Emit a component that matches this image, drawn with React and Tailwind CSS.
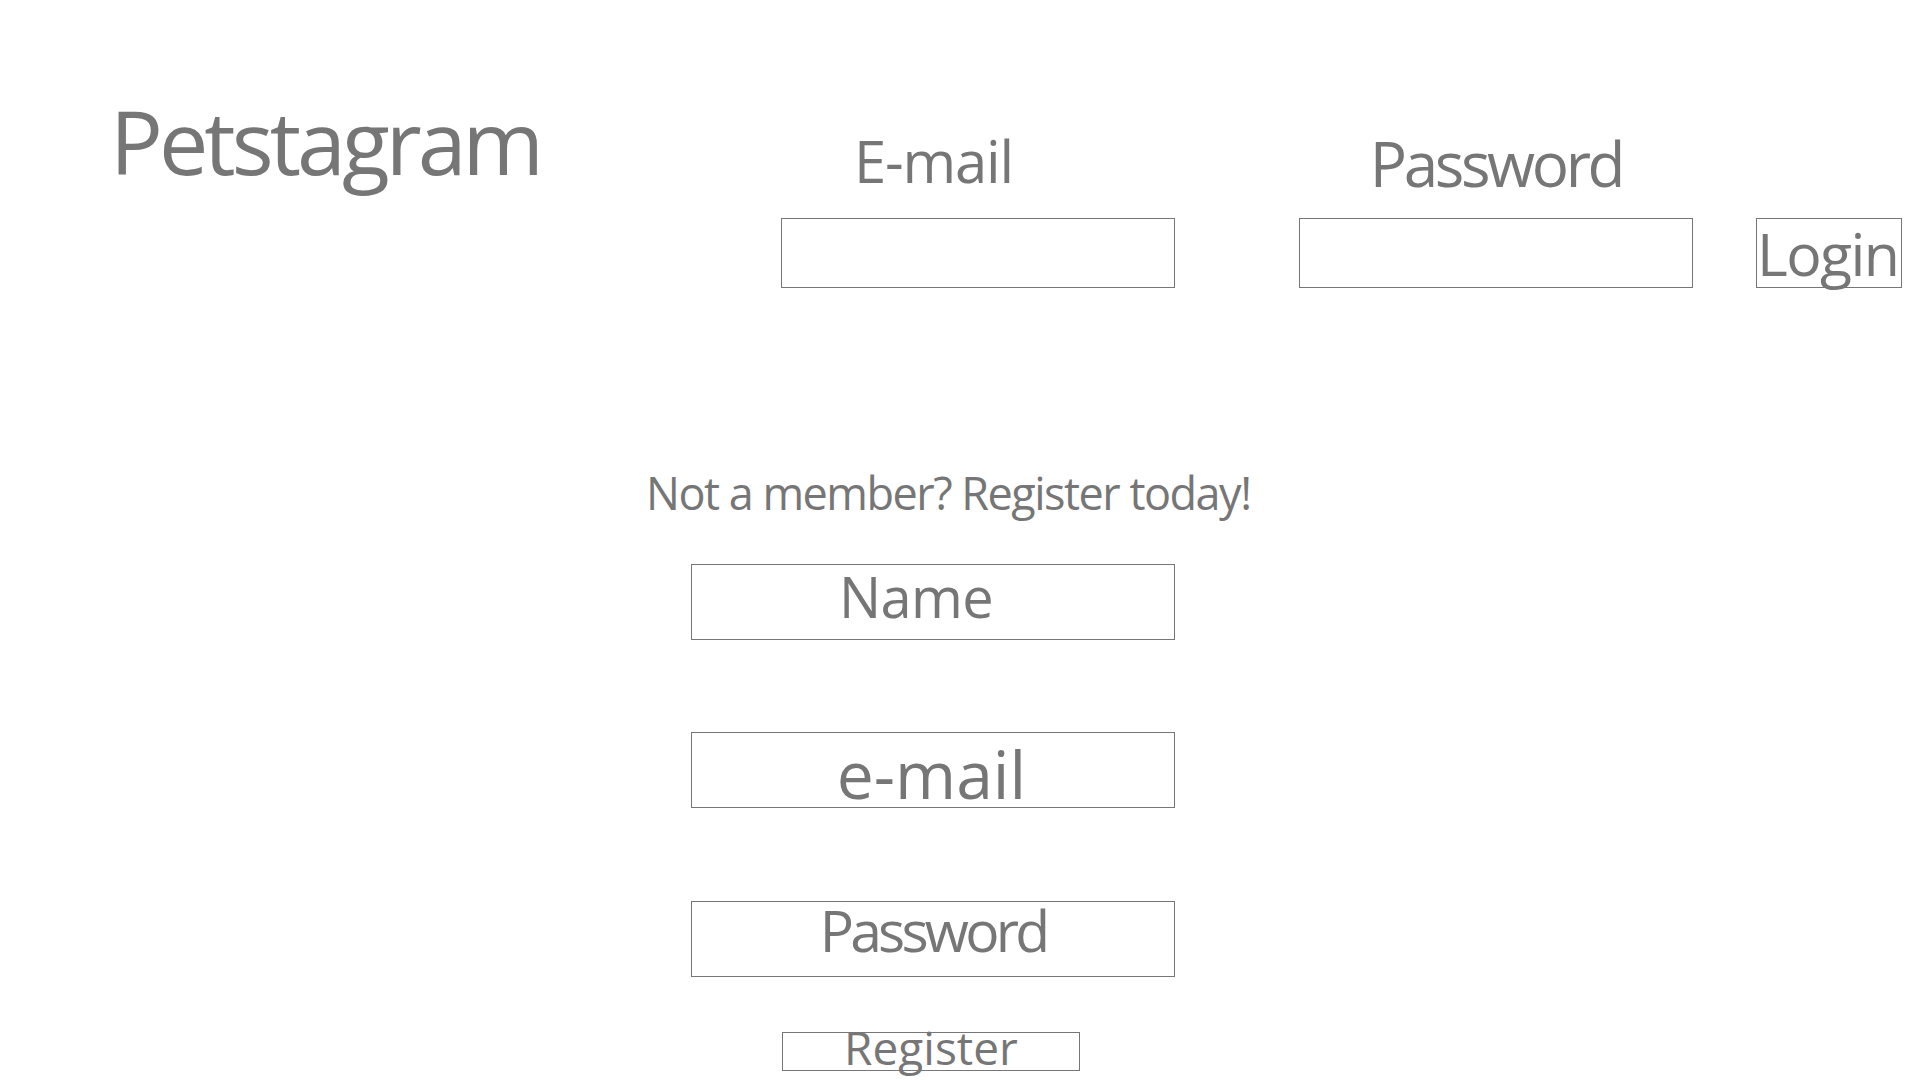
export default function App() {
  return (
    <div className="w-[1920px] h-[1080px] overflow-hidden bg-white text-[#767676] font-['Open_Sans',sans-serif]">
      <header className="flex items-start pl-[113px]">
        <div className="w-[668px] pt-[97px]">
          <h1 className="-ml-[3px] text-[88px] leading-none font-normal tracking-[-4px]">Petstagram</h1>
        </div>
        <div className="w-[394px] pt-[132px] flex flex-col">
          <div className="h-[86px]">
            <label className="block ml-[73px] text-[58px] leading-none tracking-[-1.2px]">E-mail</label>
          </div>
          <input type="text" className="w-[394px] h-[70px] border border-[#767676] outline-none" />
        </div>
        <div className="w-[394px] ml-[124px] pt-[132px] flex flex-col">
          <div className="h-[86px] flex justify-center">
            <label className="block text-[62px] leading-none tracking-[-3.4px]">Password</label>
          </div>
          <input type="password" className="w-[394px] h-[70px] border border-[#767676] outline-none" />
        </div>
        <div className="ml-[63px] pt-[218px]">
          <button className="w-[146px] h-[70px] border border-[#767676] text-[59px] leading-none text-left pt-0 tracking-[-1.6px] overflow-visible whitespace-nowrap">
            Login
          </button>
        </div>
      </header>

      <section className="flex flex-col items-start pl-[649px] mt-[182px]">
        <p className="-ml-[3px] text-[45px] leading-none tracking-[-1.5px]">Not a member? Register today!</p>
        <div className="ml-[42px] mt-[49px] w-[484px] h-[76px] border border-[#767676] flex justify-center items-start pr-[34px] pt-[3px]">
          <span className="text-[56px] leading-none tracking-[-0.6px]">Name</span>
        </div>
        <div className="ml-[42px] mt-[92px] w-[484px] h-[76px] border border-[#767676] flex justify-center items-start pr-[3px] pt-[7px]">
          <span className="text-[66px] leading-none">e-mail</span>
        </div>
        <div className="ml-[42px] mt-[93px] w-[484px] h-[76px] border border-[#767676] flex justify-center items-start pt-[0px]">
          <span className="text-[57px] leading-none tracking-[-3.8px]">Password</span>
        </div>
        <button className="ml-[133px] mt-[55px] w-[298px] h-[39px] border border-[#767676] flex justify-center items-start overflow-visible">
          <span className="text-[46px] leading-none -mt-[9px]">Register</span>
        </button>
      </section>
    </div>
  );
}
